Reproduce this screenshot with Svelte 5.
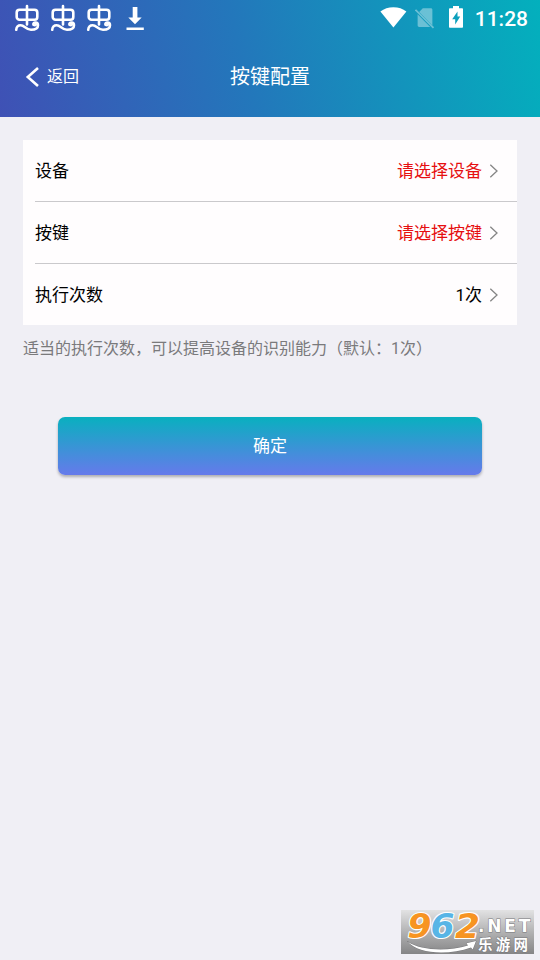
<script>
  let rows = $state([
    { label: "设备", value: "请选择设备", missing: true },
    { label: "按键", value: "请选择按键", missing: true },
    { label: "执行次数", value: "1次", missing: false },
  ]);
  const bugs = [0, 1, 2];
</script>

<div class="screen">
  <header>
    <div class="status">
      <div class="notices">
        {#each bugs as bug (bug)}
          <svg class="bug" viewBox="0 0 26 28" width="26" height="28">
            <rect x="2.700" y="5.700" width="20.600" height="10" rx="2.800" />
            <path d="M13 2v18.500M2.200 25.800c.3-3 2.300-4.500 4.500-4.500 3.800 0 5.300 4.500 10.300 4.500 4.300 0 7-1.600 7-4.500 0-1.700-1-2.800-2.500-2.800s-2.300 1.100-2 2.300" />
            <circle cx="20.800" cy="20.300" r="1" />
          </svg>
        {/each}
        <svg class="download" viewBox="0 0 18 24" width="18" height="24">
          <path d="M6.700 0h4.700v10.500h4.300L9 17.300 2.300 10.500h4.400zM.5 20.600h17.300V23H.5z" />
        </svg>
      </div>
      <div class="system">
        <svg class="wifi" viewBox="0 0 27 21" width="27" height="21">
          <path d="M.4 4.600C4 1.700 8.400.2 13.400.2s9.400 1.500 13 4.400L13.400 20.600z" />
        </svg>
        <svg class="sim" viewBox="0 0 20 21" width="20" height="21">
          <path class="body" d="M7.800.2h8c.9 0 1.600.7 1.600 1.600v15.600L4.200 4z" />
          <path class="body" d="M2.600 6.300v11c0 .9.700 1.600 1.600 1.600h11z" />
          <path class="slash" d="M.5 1.800l18 18" />
        </svg>
        <svg class="battery" viewBox="0 0 14 22" width="14" height="22">
          <path
            fill-rule="evenodd"
            d="M4 0h6v2.200h3.200c.5 0 .8.300.8.8v18c0 .5-.3.800-.8.800H.8c-.5 0-.8-.3-.8-.8V3c0-.5.3-.8.8-.8H4zM8.500 5.400L3.200 13.200h3v5.400l5-8.100H8.500z"
          />
        </svg>
        <span class="time">11:28</span>
      </div>
    </div>

    <div class="nav">
      <div class="back">
        <svg viewBox="0 0 14 20" width="14" height="20">
          <path d="M13 1L2.800 10 13 19" />
        </svg>
        <span>返回</span>
      </div>
      <h1>按键配置</h1>
    </div>
  </header>

  <main>
    <div class="card">
      {#each rows as row}
        <div class="row">
          <span>{row.label}</span>
          <span class="value" class:missing={row.missing}>{row.value}</span>
          <svg viewBox="0 0 10 14" width="10" height="14">
            <path d="M1.300.7L8 7l-6.700 6.300" />
          </svg>
        </div>
      {/each}
    </div>
    <p class="hint">适当的执行次数，可以提高设备的识别能力（默认：1次）</p>
    <button>确定</button>
  </main>

  <div class="watermark">
    <svg viewBox="0 0 133 44" width="133" height="44">
      <defs>
        <linearGradient id="plate" x1="0" y1="0" x2="0" y2="1">
          <stop offset="0" stop-color="#e2e2e3" />
          <stop offset="0.5" stop-color="#b2b2b3" />
          <stop offset="1" stop-color="#858586" />
        </linearGradient>
      </defs>
      <rect width="133" height="44" fill="url(#plate)" />
      <path class="swoosh" d="M6.500 31.500C20 41 47 41.500 67 35.500l-1.500-2.200 9.500-2.300-3.300 8.500-1.700-2C47 45.500 17 44 6.500 31.500z" />
      <g class="number">
        <text x="6.500" y="28" textLength="24" lengthAdjust="spacingAndGlyphs">9</text>
        <text class="blue" x="29.500" y="28" textLength="24" lengthAdjust="spacingAndGlyphs">6</text>
        <text x="54" y="28" textLength="25" lengthAdjust="spacingAndGlyphs">2</text>
      </g>
      <text class="net" x="77" y="21.500">.NET</text>
      <text class="name" x="77" y="40" textLength="50">乐游网</text>
    </svg>
  </div>
</div>

<style>
  :global(body) {
    background: #f0eff5;
  }

  .screen {
    position: relative;
    height: 960px;
    overflow: hidden;
    background: #f0eff5;
    font-family: Roboto, "Noto Sans CJK SC", sans-serif;
  }

  header {
    height: 117px;
    color: #fff;
    background: linear-gradient(77deg, #3f51b5 0%, #2377bb 45%, #03b0bd 100%);
  }

  .status {
    display: flex;
    justify-content: space-between;
    height: 37px;
    padding: 0 12px 0 14px;
  }

  .notices {
    display: flex;
    gap: 10px;
    padding-top: 4px;
  }

  .bug {
    fill: none;
    stroke: #fff;
    stroke-width: 2.6;
    stroke-linecap: round;
  }

  .download {
    margin: 3px 0 0 4px;
    fill: #fff;
  }

  .system {
    display: flex;
    align-items: flex-start;
    fill: #fff;
  }

  .wifi {
    margin-top: 7px;
  }

  .sim {
    margin: 8px 0 0 8px;
    opacity: 0.38;
  }

  .sim .slash {
    stroke: #fff;
    stroke-width: 1.7;
  }

  .battery {
    margin: 6px 0 0 14px;
  }

  .time {
    margin-left: 12px;
    font-size: 21px;
    font-weight: 500;
    line-height: 38px;
  }

  .nav {
    display: grid;
    grid-template-columns: 1fr auto 1fr;
    align-items: center;
    height: 80px;
  }

  .back {
    display: flex;
    align-items: center;
    gap: 8px;
    padding-left: 25px;
    font-size: 16px;
    line-height: 22px;
  }

  .back svg {
    fill: none;
    stroke: #fff;
    stroke-width: 2.6;
  }

  h1 {
    margin: 0;
    font-size: 20px;
    font-weight: 400;
    line-height: 30px;
  }

  main {
    padding: 23px 23px 0;
  }

  .card {
    padding-left: 12px;
    background: #fffdfe;
  }

  .row {
    display: flex;
    align-items: center;
    height: 61px;
    padding-right: 18px;
    font-size: 17px;
    line-height: 24px;
    color: #000;
  }

  .row + .row {
    border-top: 1px solid #cac9cc;
  }

  .value {
    margin-left: auto;
  }

  .missing {
    color: #e60f10;
  }

  .row svg {
    margin-left: 7px;
    fill: none;
    stroke: #858585;
    stroke-width: 1.3;
  }

  .hint {
    margin: 12px 0 0;
    font-size: 16px;
    line-height: 24px;
    color: #7a7a7c;
    white-space: nowrap;
  }

  button {
    display: block;
    width: 424px;
    height: 58px;
    margin: 56px auto 0;
    padding: 0 0 4px;
    border: 0;
    border-radius: 7px;
    font: inherit;
    font-size: 17px;
    color: #fff;
    background: linear-gradient(#09b0bf, #667aeb);
    box-shadow: 0 2px 3px rgba(0, 0, 0, 0.28);
  }

  .watermark {
    position: absolute;
    right: 6px;
    bottom: 6px;
    width: 133px;
    height: 44px;
  }

  .watermark svg {
    display: block;
  }

  .number text {
    font: italic bold 33px "DejaVu Sans", sans-serif;
    fill: #f79422;
    stroke: #fff;
    stroke-width: 2.2;
    stroke-linejoin: round;
    paint-order: stroke;
  }

  .number .blue {
    fill: #58b5e6;
  }

  .net,
  .name,
  .swoosh {
    fill: #fff;
    stroke: #77777a;
    stroke-width: 1;
    paint-order: stroke;
  }

  .net {
    font: bold 17px "DejaVu Sans", sans-serif;
    letter-spacing: 2.8px;
  }

  .name {
    font: bold 14.5px "Noto Sans CJK SC", sans-serif;
  }
</style>
